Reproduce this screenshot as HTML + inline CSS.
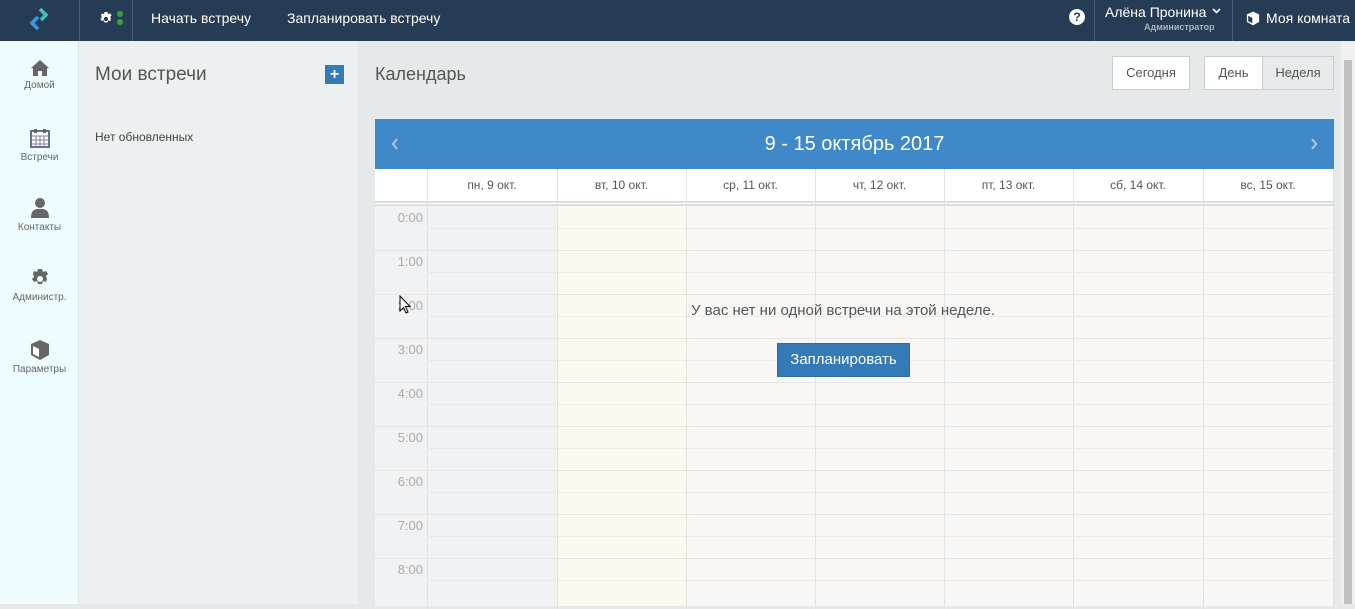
<!DOCTYPE html><html><head><meta charset="utf-8"><style>
*{margin:0;padding:0;box-sizing:border-box}
body{width:1355px;height:604px;overflow:hidden;font-family:"Liberation Sans",sans-serif;background:#e6e9ea;position:relative}
.a{position:absolute}
.top{left:0;top:0;width:1355px;height:41px;background:#263c54;color:#fff;font-size:14px}
.side{left:0;top:41px;width:79px;height:563px;background:#effcfd;border-right:1px solid #dfe6e6}
.si{position:absolute;left:0;width:79px;text-align:center;font-size:10px;color:#666}
.panel{left:79px;top:41px;width:279px;height:563px;background:#edf0f0}
.col{position:absolute;top:206px;height:400px}
.hl{position:absolute;left:375px;width:959px;height:1px}
.btn{position:absolute;background:#fff;border:1px solid #ccc;font-size:13px;color:#555;text-align:center;line-height:32px}
</style></head><body>
<div class="a top">
 <div class="a" style="left:79px;top:0;width:1px;height:41px;background:#4a5d72"></div>
 <div class="a" style="left:132px;top:0;width:1px;height:41px;background:#4a5d72"></div>
 <svg class="a" style="left:28px;top:6px" width="22" height="26" viewBox="0 0 22 26"><path d="M12 3 L18 9 L13 14" stroke="#3bc4c0" stroke-width="3.5" fill="none"/><path d="M10 11 L4 17 L10 23" stroke="#3c9be0" stroke-width="3.5" fill="none"/></svg>
 <svg class="a" style="left:99px;top:12px" width="14" height="14" viewBox="0 0 20 20"><path d="M8 0h4l1 3 3-1 2 3-2 2 1 3-1 3-3-1-1 3-4 0-1-3-3 1-2-3 2-2-1-3 1-3 3 1z" fill="#fff"/><circle cx="10" cy="10" r="3" fill="#263c54"/></svg>
 <div class="a" style="left:117px;top:11px;width:6px;height:6px;border-radius:50%;background:#3c9d3c"></div>
 <div class="a" style="left:117px;top:19px;width:6px;height:6px;border-radius:50%;background:#3c9d3c"></div>
 <div class="a" style="left:151px;top:10px">Начать встречу</div>
 <div class="a" style="left:287px;top:10px">Запланировать встречу</div>
 <div class="a" style="left:1069px;top:9px;width:16px;height:16px;border-radius:50%;background:#fff;color:#263c54;font-weight:bold;font-size:12px;text-align:center;line-height:16px">?</div>
 <div class="a" style="left:1094px;top:0;width:1px;height:41px;background:#4a5d72"></div>
 <div class="a" style="left:1105px;top:4px">Алёна Пронина</div>
 <svg class="a" style="left:1212px;top:8px" width="9" height="6"><path d="M1 1L4.5 4.5L8 1" stroke="#fff" stroke-width="1.6" fill="none"/></svg>
 <div class="a" style="left:1144px;top:22px;font-size:9px;color:#aab4bf;font-weight:bold">Администратор</div>
 <div class="a" style="left:1232px;top:0;width:1px;height:41px;background:#4a5d72"></div>
 <svg class="a" style="left:1246px;top:11px" width="14" height="15" viewBox="0 0 20 22"><path d="M10 1 L19 5 L19 16 L10 21 L1 16 L1 5Z" fill="#fff"/><path d="M3 7 L9 10 L9 18 L3 15Z" fill="#263c54"/></svg>
 <div class="a" style="left:1266px;top:10px">Моя комната</div>
</div>
<div class="a side">
 <div class="si" style="top:18px"><svg width="20" height="18" viewBox="0 0 20 18"><path d="M10 1 L19 9 L17 9 L17 17 L12 17 L12 12 L8 12 L8 17 L3 17 L3 9 L1 9Z" fill="#666"/></svg><br>Домой</div>
 <div class="si" style="top:86px"><svg width="20" height="22" viewBox="0 0 20 20"><rect x="1" y="3" width="18" height="16" fill="#fff" stroke="#6a6a8a" stroke-width="2"/><path d="M1 8H19M6 8V19M10 8V19M14 8V19M1 12H19M1 16H19" stroke="#8a7fb0"/><rect x="4" y="1" width="3" height="4" fill="#666"/><rect x="13" y="1" width="3" height="4" fill="#666"/></svg><br>Встречи</div>
 <div class="si" style="top:156px"><svg width="20" height="22"><circle cx="10" cy="6" r="5" fill="#666"/><path d="M1 21 Q1 11 10 12 Q19 11 19 21Z" fill="#666"/></svg><br>Контакты</div>
 <div class="si" style="top:228px"><svg width="20" height="20" viewBox="0 0 20 20"><path d="M8 0h4l1 3 3-1 2 3-2 2 1 3-1 3-3-1-1 3-4 0-1-3-3 1-2-3 2-2-1-3 1-3 3 1z" fill="#666"/><circle cx="10" cy="10" r="3" fill="#effcfd"/></svg><br>Администр.</div>
 <div class="si" style="top:298px"><svg width="20" height="22" viewBox="0 0 20 22"><path d="M10 1 L19 5 L19 16 L10 21 L1 16 L1 5Z" fill="#666"/><path d="M3 7 L9 10 L9 18 L3 15Z" fill="#fff"/></svg><br>Параметры</div>
</div>
<div class="a panel">
 <div class="a" style="left:16px;top:23px;font-size:19px;color:#555">Мои встречи</div>
 <div class="a" style="left:246px;top:24px;width:19px;height:19px;background:#337ab7;color:#fff;font-weight:bold;text-align:center;line-height:19px;font-size:16px">+</div>
 <div class="a" style="left:16px;top:89px;font-size:12px;color:#444">Нет обновленных</div>
</div>
<div class="a" style="left:375px;top:64px;font-size:18px;color:#555">Календарь</div>
<div class="btn" style="left:1112px;top:56px;width:78px;height:34px">Сегодня</div>
<div class="btn" style="left:1204px;top:56px;width:59px;height:34px">День</div>
<div class="btn" style="left:1262px;top:56px;width:72px;height:34px;background:#e8ebec">Неделя</div>
<div class="a" style="left:1341px;top:41px;width:14px;height:563px;background:#f0f0f0"></div>
<div class="a" style="left:1344px;top:60px;width:8px;height:544px;background:#c1c1c1"></div>
<div class="a" style="left:375px;top:119px;width:959px;height:50px;background:#3f89c8;color:#fff">
 <svg class="a" style="left:16px;top:19px" width="8" height="12"><path d="M6 1L2 6L6 11" stroke="#a9cbe9" stroke-width="2" fill="none"/></svg>
 <div class="a" style="left:0;width:959px;top:14px;text-align:center;font-size:20px">9 - 15 октябрь 2017</div>
 <svg class="a" style="left:935px;top:19px" width="8" height="12"><path d="M2 1L6 6L2 11" stroke="#a9cbe9" stroke-width="2" fill="none"/></svg>
</div>
<div class="a" style="left:375px;top:169px;width:959px;height:37px;background:#fff;border-bottom:5px double #ddd"></div>
<div class="col" style="left:375px;width:52px;background:#f1f2f3"></div>
<div class="col" style="left:427px;width:130px;background:#f1f2f3"></div>
<div class="col" style="left:557px;width:129px;background:#fcf9ef"></div>
<div class="col" style="left:686px;width:648px;background:#f8f7f5"></div>
<div id="g"></div>
<div class="a" style="left:660px;top:302px;width:366px;text-align:center;font-size:15px;color:#555">У вас нет ни одной встречи на этой неделе.</div>
<div class="a" style="left:777px;top:343px;width:133px;height:34px;background:#337ab7;border:1px solid #2e6da4;color:#fff;font-size:15px;text-align:center;line-height:32px">Запланировать</div>
<svg class="a" style="left:399px;top:295px" width="13" height="20"><path d="M1 1L1 16L4.5 12.5L7 18L9 17L6.5 11.5L11 11.5Z" fill="#fff" stroke="#000"/></svg>
<script>
var h='',xs=[427,557,686,815,944,1073,1203,1333],d=['пн, 9 окт.','вт, 10 окт.','ср, 11 окт.','чт, 12 окт.','пт, 13 окт.','сб, 14 окт.','вс, 15 окт.'];
for(var i=0;i<xs.length;i++){h+='<div class="a" style="left:'+xs[i]+'px;top:169px;width:1px;height:440px;background:#e2e2e2"></div>';
if(i<7)h+='<div class="a" style="left:'+xs[i]+'px;width:'+(xs[i+1]-xs[i])+'px;top:178px;text-align:center;font-size:12px;color:#555">'+d[i]+'</div>';}
for(var k=0;k<9;k++){var y=206+44*k;
if(k)h+='<div class="hl" style="top:'+y+'px;background:#e6e6e6"></div>';
h+='<div class="a" style="left:427px;width:907px;top:'+(y+22)+'px;border-top:1px dotted #e2e2e2"></div>';
h+='<div class="a" style="left:375px;width:48px;text-align:right;top:'+(y+4)+'px;font-size:13px;color:#aaa">'+k+':00</div>';}
document.getElementById('g').innerHTML=h;
</script>
</body></html>
